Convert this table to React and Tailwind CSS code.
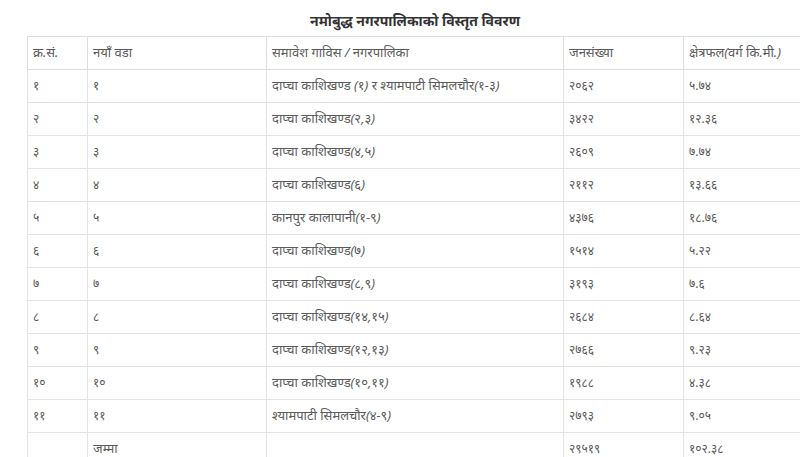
import React from 'react';

const rows = [
  ['१', '१', 'दाप्चा काशिखण्ड (१) र श्यामपाटी सिमलचौर(१-३)', '२०६२', '५.७४'],
  ['२', '२', 'दाप्चा काशिखण्ड(२,३)', '३४२२', '१२.३६'],
  ['३', '३', 'दाप्चा काशिखण्ड(४,५)', '२६०९', '७.७४'],
  ['४', '४', 'दाप्चा काशिखण्ड(६)', '२११२', '१३.६६'],
  ['५', '५', 'कानपुर कालापानी(१-९)', '४३७६', '१८.७६'],
  ['६', '६', 'दाप्चा काशिखण्ड(७)', '१५१४', '५.२२'],
  ['७', '७', 'दाप्चा काशिखण्ड(८,९)', '३१९३', '७.६'],
  ['८', '८', 'दाप्चा काशिखण्ड(१४,१५)', '२६८४', '८.६४'],
  ['९', '९', 'दाप्चा काशिखण्ड(१२,१३)', '२७६६', '९.२३'],
  ['१०', '१०', 'दाप्चा काशिखण्ड(१०,११)', '१९८८', '४.३८'],
  ['११', '११', 'श्यामपाटी सिमलचौर(४-९)', '२७९३', '९.०५'],
  ['', 'जम्मा', '', '२९५१९', '१०२.३८'],
];

const headers = ['क्र.सं.', 'नयाँ वडा', 'समावेश गाविस / नगरपालिका', 'जनसंख्या', 'क्षेत्रफल(वर्ग कि.मी.)'];
const widths = ['w-[60px]', 'w-[179px]', 'w-[297px]', 'w-[120px]', 'w-[120px]'];

export default function App() {
  return (
    <div className="w-[800px] h-[457px] overflow-hidden bg-white font-['Noto_Sans','Liberation_Sans',sans-serif]">
      <div className="pl-[27px] w-[803px]">
        <h2 className="h-[36px] flex items-center justify-center text-[14px] font-bold text-[#333] pt-[4px]">
          नमोबुद्ध नगरपालिकाको विस्तृत विवरण
        </h2>
        <table className="w-[776px] border-collapse table-fixed text-[13px] italic text-[#5a5a5a]">
          <thead>
            <tr className="h-[33px]">
              {headers.map((h, i) => (
                <th key={i} className={`${widths[i]} border border-[#dedede] px-[5px] text-left font-normal`}>
                  {h}
                </th>
              ))}
            </tr>
          </thead>
          <tbody>
            {rows.map((r, i) => (
              <tr key={i} className="h-[33px]">
                {r.map((c, j) => (
                  <td key={j} className={`border border-[#e3e3e3] px-[5px] ${j >= 3 || (j < 2 && i < 11) ? 'not-italic text-[12px]' : ''}`}>
                    {c}
                  </td>
                ))}
              </tr>
            ))}
          </tbody>
        </table>
      </div>
    </div>
  );
}
